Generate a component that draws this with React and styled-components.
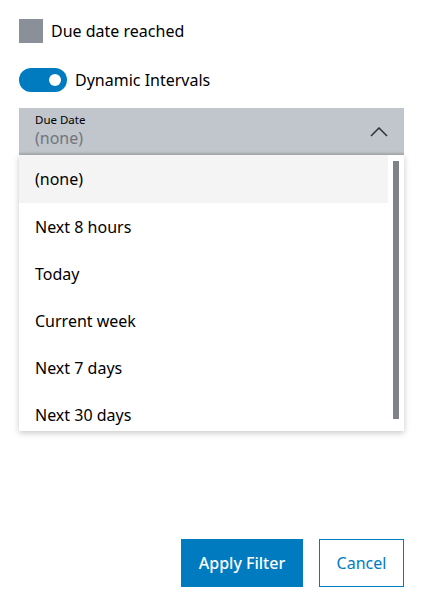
import React from "react";
import styled, { createGlobalStyle } from "styled-components";

const GlobalStyle = createGlobalStyle`
  html, body {
    margin: 0;
    padding: 0;
    background: #ffffff;
  }
  body {
    font-family: "Noto Sans", "Open Sans", sans-serif;
    color: #000000;
  }
`;

const Page = styled.div`
  height: 612px;
  box-sizing: border-box;
  padding: 19px 23px 25px 19px;
  display: flex;
  flex-direction: column;
`;

const CheckRow = styled.label`
  display: flex;
  align-items: center;
  gap: 8px;
  height: 24px;
  font-size: 16px;
`;

const Box = styled.span`
  width: 24px;
  height: 24px;
  background: #8a9097;
`;

const ToggleRow = styled.label`
  display: flex;
  align-items: center;
  gap: 8px;
  height: 24px;
  margin-top: 25px;
  font-size: 16px;
`;

const Track = styled.span`
  position: relative;
  width: 48px;
  height: 24px;
  border-radius: 12px;
  background: ${(p) => (p.on ? "#007bc0" : "#8a9097")};

  &::after {
    content: "";
    position: absolute;
    top: 6px;
    left: ${(p) => (p.on ? "30px" : "6px")};
    width: 12px;
    height: 12px;
    border-radius: 50%;
    background: #ffffff;
  }
`;

const Select = styled.div`
  position: relative;
  margin-top: 16px;
`;

const SelectHead = styled.div`
  height: 47px;
  box-sizing: border-box;
  background: #c1c5cc;
  padding: 0 16px;
  display: flex;
  align-items: center;
  justify-content: space-between;
  box-shadow: inset 0 -3px 2px -1px #a9aeb4;
`;

const HeadText = styled.div`
  display: flex;
  flex-direction: column;
  margin-top: -2px;
`;

const Label = styled.span`
  font-size: 11.5px;
  line-height: 15px;
  color: #000000;
`;

const Value = styled.span`
  font-size: 16px;
  line-height: 22px;
  color: #71767c;
`;

const Menu = styled.ul`
  position: absolute;
  top: 47px;
  left: 0;
  right: 0;
  height: 276px;
  margin: 0;
  padding: 0 16px 0 0;
  list-style: none;
  background: #ffffff;
  box-shadow: 0 2px 6px rgba(0, 0, 0, 0.22);
  overflow: hidden;
  z-index: 2;
`;

const Item = styled.li`
  height: ${(p) => (p.first ? "48px" : "47px")};
  display: flex;
  align-items: center;
  padding-left: 16px;
  font-size: 16px;
  background: ${(p) => (p.active ? "#f4f4f4" : "transparent")};
`;

const Thumb = styled.span`
  position: absolute;
  top: 6px;
  right: 5px;
  width: 6px;
  height: 258px;
  background: #7d8389;
`;

const Actions = styled.div`
  margin-top: auto;
  display: flex;
  justify-content: flex-end;
  gap: 16px;
`;

const Button = styled.button`
  height: 48px;
  box-sizing: border-box;
  padding: 0 16px;
  font-family: "Noto Sans", "Open Sans", sans-serif;
  font-size: 16px;
  font-weight: ${(p) => (p.primary ? 500 : 400)};
  color: ${(p) => (p.primary ? "#ffffff" : "#007bc0")};
  background: ${(p) => (p.primary ? "#007bc0" : "#ffffff")};
  border: 1px solid #007bc0;
  border-radius: 0;
`;

const options = [
  "(none)",
  "Next 8 hours",
  "Today",
  "Current week",
  "Next 7 days",
  "Next 30 days",
];

export default function App() {
  return (
    <>
      <GlobalStyle />
      <Page>
        <CheckRow>
          <Box />
          Due date reached
        </CheckRow>
        <ToggleRow>
          <Track on />
          Dynamic Intervals
        </ToggleRow>
        <Select>
          <SelectHead>
            <HeadText>
              <Label>Due Date</Label>
              <Value>(none)</Value>
            </HeadText>
            <svg width="18" height="10" viewBox="0 0 18 10">
              <path d="M1 9 L9 1 L17 9" fill="none" stroke="#2e3135" strokeWidth="1.5" />
            </svg>
          </SelectHead>
          <Menu>
            {options.map((o, i) => (
              <Item key={o} first={i === 0} active={i === 0}>
                {o}
              </Item>
            ))}
            <Thumb />
          </Menu>
        </Select>
        <Actions>
          <Button primary style={{ width: 122 }}>Apply Filter</Button>
          <Button style={{ width: 85 }}>Cancel</Button>
        </Actions>
      </Page>
    </>
  );
}
